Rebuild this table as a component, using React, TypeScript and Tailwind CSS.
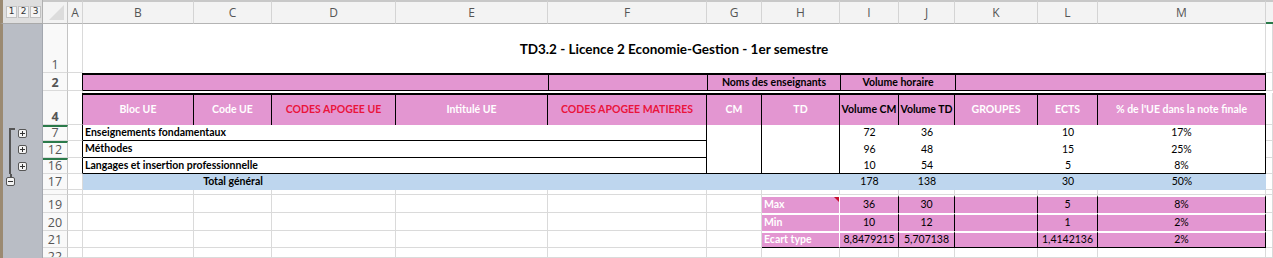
import React from 'react'

// une "feuille" Excel: colonnes a largeur fixe, lignes en flex

function Gutter({ children, className = '' }: { children?: React.ReactNode; className?: string }) {
    return (
        <div className={`w-[43px] shrink-0 flex bg-[#b9bdc5] border-l-[3px] border-l-[#9b8a72] border-r border-r-[#a3a7af] ${className}`}>
            {children}
        </div>
    )
}

function RowHead({ n, className = '' }: { n?: string; className?: string }) {
    return (
        <div className={`w-[25px] shrink-0 flex items-end justify-center pb-[1px] overflow-hidden bg-[#f9f9f9] border-r border-r-[#c4c4c4] border-b border-b-[#dadada] font-['Open_Sans',sans-serif] text-[12.5px] leading-none text-[#555] ${className}`}>
            {n}
        </div>
    )
}

function OutlineBox({ plus }: { plus?: boolean }) {
    return (
        <svg width="9" height="9" viewBox="0 0 9 9" className="shrink-0">
            <rect x="0.5" y="0.5" width="8" height="8" rx="1.5" fill="#f3f3f3" stroke="#555" />
            <line x1="2" y1="4.5" x2="7" y2="4.5" stroke="#333" />
            {plus && <line x1="4.5" y1="2" x2="4.5" y2="7" stroke="#333" />}
        </svg>
    )
}

const grid = 'border-r border-b border-[#dadada]'

export default function App() {
    const details = [
        { n: '7', h: 'h-[16px]', label: 'Enseignements fondamentaux', cm: '72', td: '36', ects: '10', pct: '17%' },
        { n: '12', h: 'h-[17px]', label: 'Méthodes', cm: '96', td: '48', ects: '15', pct: '25%' },
        { n: '16', h: 'h-[16px]', label: 'Langages et insertion professionnelle', cm: '10', td: '54', ects: '5', pct: '8%' },
    ]

    const stats = [
        { n: '19', h: 'h-[18px]', label: 'Max', cm: '36', td: '30', ects: '5', pct: '8%', note: true },
        { n: '20', h: 'h-[18px]', label: 'Min', cm: '10', td: '12', ects: '1', pct: '2%' },
        { n: '21', h: 'h-[17px]', label: 'Ecart type', cm: '8,8479215', td: '5,707138', ects: '1,4142136', pct: '2%', last: true },
    ]

    const letters = [
        { l: 'A', w: 'w-[15px]' },
        { l: 'B', w: 'w-[111px]' },
        { l: 'C', w: 'w-[78px]' },
        { l: 'D', w: 'w-[124px]' },
        { l: 'E', w: 'w-[152px]' },
        { l: 'F', w: 'w-[159px]' },
        { l: 'G', w: 'w-[55px]' },
        { l: 'H', w: 'w-[78px]' },
        { l: 'I', w: 'w-[59px]' },
        { l: 'J', w: 'w-[56px]' },
        { l: 'K', w: 'w-[83px]' },
        { l: 'L', w: 'w-[60px]' },
        { l: 'M', w: 'w-[168px]' },
    ]

    // largeurs des colonnes vides A..G pour les lignes du bas
    const blanks = ['w-[15px]', 'w-[111px]', 'w-[78px]', 'w-[124px]', 'w-[152px]', 'w-[159px]', 'w-[55px]']
    const rightCols = ['w-[78px]', 'w-[59px]', 'w-[56px]', 'w-[83px]', 'w-[60px]', 'w-[168px]']

    return (
        <div className="w-[1273px] h-[258px] overflow-hidden bg-white font-['Lato',sans-serif] text-black">

            {/* en-tetes de colonnes */}
            <div className="flex h-[24px]">
                <div className="w-[43px] shrink-0 flex items-center gap-[1px] pl-[3px] bg-[#dedede] border-l-[3px] border-l-[#9b8a72] border-b border-b-[#a9a9a9] border-r border-r-[#b0b0b0]">
                    {['1', '2', '3'].map((n) => (
                        <div key={n} className="w-[11px] h-[12px] flex items-center justify-center bg-[#f4f4f4] border border-[#c2c2c2] font-['DejaVu_Sans',sans-serif] text-[9px] leading-none text-[#333]">{n}</div>
                    ))}
                </div>
                <div className="w-[25px] shrink-0 flex items-end justify-end p-[3px] bg-[#f3f3f3] border-t-2 border-t-[#c8c8c8] border-r border-r-[#c4c4c4] border-b border-b-[#b4b4b4]">
                    <svg width="15" height="15" viewBox="0 0 15 15"><polygon points="15,0 15,15 0,15" fill="#dcdcdc" /></svg>
                </div>
                {letters.map((c) => (
                    <div key={c.l} className={`${c.w} shrink-0 flex items-center justify-center bg-[#f3f3f3] border-t-2 border-t-[#c8c8c8] border-r border-r-[#d4d4d4] border-b border-b-[#b4b4b4] font-['Open_Sans',sans-serif] text-[12px] text-[#555]`}>
                        {c.l}
                    </div>
                ))}
                <div className="flex-1 bg-[#f3f3f3] border-t-2 border-t-[#c8c8c8] border-b-2 border-b-[#2a7a4a]" />
            </div>

            {/* ligne 1 : titre */}
            <div className="flex h-[49px]">
                <Gutter />
                <RowHead n="1" />
                <div className={`w-[15px] shrink-0 ${grid}`} />
                <div className="w-[1183px] shrink-0 flex items-center justify-center pt-[1px] font-bold text-[13.5px] border-r border-[#dadada]">
                    TD3.2 - Licence 2 Economie-Gestion - 1er semestre
                </div>
                <div className={`flex-1 ${grid}`} />
            </div>

            {/* ligne 2 */}
            <div className="flex h-[18px] text-[10.5px] font-bold">
                <Gutter />
                <RowHead n="2" />
                <div className="w-[15px] shrink-0 border-r border-r-black border-b border-b-[#dadada]" />
                <div className="w-[465px] shrink-0 bg-[#e396d1] border-t-2 border-b border-black" />
                <div className="w-[159px] shrink-0 bg-[#e396d1] border-t-2 border-b border-l border-black" />
                <div className="w-[133px] shrink-0 flex items-center justify-center bg-[#e396d1] border-t-2 border-b border-l border-black">Noms des enseignants</div>
                <div className="w-[115px] shrink-0 flex items-center justify-center bg-[#e396d1] border-t-2 border-b border-l border-black">Volume horaire</div>
                <div className="w-[311px] shrink-0 bg-[#e396d1] border-t-2 border-b border-x border-black" />
                <div className={`flex-1 ${grid}`} />
            </div>

            {/* ligne 3 masquee */}
            <div className="flex h-[2px]">
                <Gutter />
                <RowHead className="border-b-0" />
                <div className="w-[15px] shrink-0 border-r border-[#dadada]" />
                <div className="flex-1" />
            </div>

            {/* ligne 4 : en-tetes du tableau */}
            <div className="flex h-[32px] text-[10.5px] font-bold text-white">
                <Gutter />
                <RowHead n="4" />
                <div className="w-[15px] shrink-0 border-r border-r-black border-b border-b-[#dadada]" />
                <div className="w-[111px] shrink-0 flex items-center justify-center bg-[#e396d1] border-t-2 border-r border-black">Bloc UE</div>
                <div className="w-[78px] shrink-0 flex items-center justify-center bg-[#e396d1] border-t-2 border-r border-black">Code UE</div>
                <div className="w-[124px] shrink-0 flex items-center justify-center bg-[#e396d1] border-t-2 border-r border-black text-[#ea143c]">CODES APOGEE UE</div>
                <div className="w-[152px] shrink-0 flex items-center justify-center bg-[#e396d1] border-t-2 border-r border-black">Intitulé UE</div>
                <div className="w-[159px] shrink-0 flex items-center justify-center bg-[#e396d1] border-t-2 border-r border-black text-[#ea143c]">CODES APOGEE MATIERES</div>
                <div className="w-[55px] shrink-0 flex items-center justify-center bg-[#e396d1] border-t-2 border-r border-black">CM</div>
                <div className="w-[78px] shrink-0 flex items-center justify-center bg-[#e396d1] border-t-2 border-r border-black">TD</div>
                <div className="w-[59px] shrink-0 flex items-center justify-center whitespace-nowrap bg-[#e396d1] border-t-2 border-r border-black text-black">Volume CM</div>
                <div className="w-[56px] shrink-0 flex items-center justify-center whitespace-nowrap bg-[#e396d1] border-t-2 border-r border-black text-black">Volume TD</div>
                <div className="w-[83px] shrink-0 flex items-center justify-center bg-[#e396d1] border-t-2 border-r border-black">GROUPES</div>
                <div className="w-[60px] shrink-0 flex items-center justify-center bg-[#e396d1] border-t-2 border-r border-black">ECTS</div>
                <div className="w-[168px] shrink-0 flex items-center justify-center bg-[#e396d1] border-t-2 border-r border-black">% de l'UE dans la note finale</div>
                <div className={`flex-1 ${grid}`} />
            </div>

            {/* lignes 7, 12, 16 : blocs d'UE */}
            {details.map((d, i) => {
                const last = i === details.length - 1
                return (
                    <div key={d.n} className={`flex ${d.h} text-[10.5px]`}>
                        <Gutter className="pl-[6px]">
                            <div className={`self-stretch w-[6px] border-l-2 border-[#555] ${i === 0 ? 'mt-[3px] border-t-2' : ''}`} />
                            <div className="flex items-center pl-[3px]"><OutlineBox plus /></div>
                        </Gutter>
                        <RowHead n={d.n} className="border-t-2 border-t-[#2a7a4a]" />
                        <div className="w-[15px] shrink-0 border-r border-r-black border-b border-b-[#dadada]" />
                        <div className="w-[624px] shrink-0 flex items-center pl-[2px] font-bold border-b border-r border-black">{d.label}</div>
                        <div className={`w-[55px] shrink-0 border-r border-black ${last ? 'border-b' : ''}`} />
                        <div className={`w-[78px] shrink-0 border-r border-black ${last ? 'border-b' : ''}`} />
                        <div className={`w-[59px] shrink-0 flex items-center justify-center ${last ? 'border-b border-black' : ''}`}>{d.cm}</div>
                        <div className={`w-[56px] shrink-0 flex items-center justify-center ${last ? 'border-b border-black' : ''}`}>{d.td}</div>
                        <div className={`w-[83px] shrink-0 ${last ? 'border-b border-black' : ''}`} />
                        <div className={`w-[60px] shrink-0 flex items-center justify-center ${last ? 'border-b border-black' : ''}`}>{d.ects}</div>
                        <div className={`w-[168px] shrink-0 flex items-center justify-center border-r border-black ${last ? 'border-b' : ''}`}>{d.pct}</div>
                        <div className={`flex-1 ${grid}`} />
                    </div>
                )
            })}

            {/* ligne 17 : total */}
            <div className="flex h-[16px] text-[10.5px]">
                <Gutter className="pl-[3px]">
                    <div className="flex flex-col items-center w-[9px]">
                        <div className="w-[2px] h-[3px] bg-[#555]" />
                        <OutlineBox />
                    </div>
                </Gutter>
                <RowHead n="17" />
                <div className={`w-[15px] shrink-0 ${grid}`} />
                <div className="w-[111px] shrink-0 bg-[#bed6ee]" />
                <div className="w-[78px] shrink-0 flex items-center justify-center bg-[#bed6ee] font-bold whitespace-nowrap">Total général</div>
                <div className="w-[124px] shrink-0 bg-[#bed6ee]" />
                <div className="w-[152px] shrink-0 bg-[#bed6ee]" />
                <div className="w-[159px] shrink-0 bg-[#bed6ee]" />
                <div className="w-[55px] shrink-0 bg-[#bed6ee]" />
                <div className="w-[78px] shrink-0 bg-[#bed6ee]" />
                <div className="w-[59px] shrink-0 flex items-center justify-center bg-[#bed6ee]">178</div>
                <div className="w-[56px] shrink-0 flex items-center justify-center bg-[#bed6ee]">138</div>
                <div className="w-[83px] shrink-0 bg-[#bed6ee]" />
                <div className="w-[60px] shrink-0 flex items-center justify-center bg-[#bed6ee]">30</div>
                <div className="w-[168px] shrink-0 flex items-center justify-center bg-[#bed6ee]">50%</div>
                <div className={`flex-1 ${grid}`} />
            </div>

            {/* ligne 18 (presque masquee) */}
            <div className="flex h-[5px]">
                <Gutter />
                <RowHead />
                {blanks.map((w, k) => <div key={k} className={`${w} shrink-0 ${grid}`} />)}
                {rightCols.map((w, k) => <div key={k} className={`${w} shrink-0 ${grid}`} />)}
                <div className={`flex-1 ${grid}`} />
            </div>

            {/* lignes 19 a 21 : statistiques */}
            {stats.map((s) => (
                <div key={s.n} className={`flex ${s.h} text-[10.5px]`}>
                    <Gutter />
                    <RowHead n={s.n} />
                    {blanks.map((w, k) => <div key={k} className={`${w} shrink-0 ${grid}`} />)}
                    <div className={`relative w-[78px] shrink-0 flex items-center pl-[2px] bg-[#e396d1] border-t-2 border-t-white border-r border-r-white font-bold text-white ${s.last ? 'border-b border-b-black' : ''}`}>
                        {s.label}
                        {s.note && <div className="absolute top-0 right-0 w-0 h-0 border-t-[5px] border-t-[#c8102e] border-l-[5px] border-l-transparent" />}
                    </div>
                    <div className={`w-[59px] shrink-0 flex items-center justify-center bg-[#e396d1] border-t-2 border-t-white border-r border-r-black ${s.last ? 'border-b border-b-black' : ''}`}>{s.cm}</div>
                    <div className={`w-[56px] shrink-0 flex items-center justify-center bg-[#e396d1] border-t-2 border-t-white border-r border-r-black ${s.last ? 'border-b border-b-black' : ''}`}>{s.td}</div>
                    <div className={`w-[83px] shrink-0 bg-[#e396d1] border-t-2 border-t-white border-r border-r-black ${s.last ? 'border-b border-b-black' : ''}`} />
                    <div className={`w-[60px] shrink-0 flex items-center justify-center bg-[#e396d1] border-t-2 border-t-white border-r border-r-black ${s.last ? 'border-b border-b-black' : ''}`}>{s.ects}</div>
                    <div className={`w-[168px] shrink-0 flex items-center justify-center bg-[#e396d1] border-t-2 border-t-white border-r border-r-black ${s.last ? 'border-b border-b-black' : ''}`}>{s.pct}</div>
                    <div className={`flex-1 ${grid}`} />
                </div>
            ))}

            {/* ligne 22 (coupee en bas, comme dans la capture) */}
            <div className="flex h-[10px]">
                <Gutter />
                <RowHead n="22" className="items-start pt-[3px] pb-0" />
                {blanks.map((w, k) => <div key={k} className={`${w} shrink-0 ${grid}`} />)}
                {rightCols.map((w, k) => <div key={k} className={`${w} shrink-0 ${grid}`} />)}
                <div className={`flex-1 ${grid}`} />
            </div>
        </div>
    )
}
